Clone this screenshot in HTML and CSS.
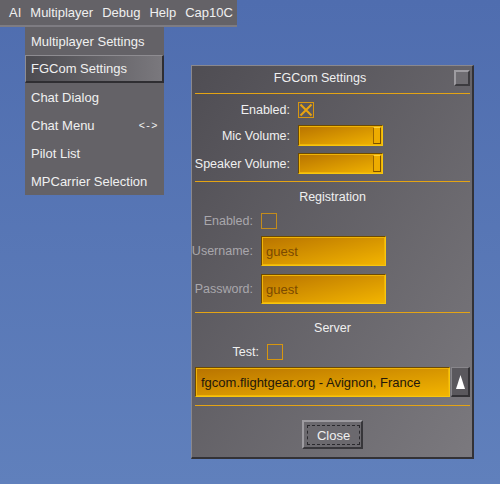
FILE: index.html
```html
<!DOCTYPE html>
<html lang="en">
  <head>
    <meta charset="UTF-8" />
    <title>FGCom Settings</title>
    <link rel="stylesheet" href="styles.css">
  </head>
  <body>
    <div class="menubar">
      <span class="menu-title">AI</span>
      <span class="menu-title">Multiplayer</span>
      <span class="menu-title">Debug</span>
      <span class="menu-title">Help</span>
      <span class="menu-title">Cap10C</span>
    </div>

    <div class="dropdown">
      <div class="menu-item">Multiplayer Settings</div>
      <div class="menu-item active">FGCom Settings</div>
      <div class="menu-item">Chat Dialog</div>
      <div class="menu-item">Chat Menu <span class="shortcut">&lt;-&gt;</span></div>
      <div class="menu-item">Pilot List</div>
      <div class="menu-item">MPCarrier Selection</div>
    </div>

    <div class="dialog">
      <div class="dialog-title">
        <span class="title-text">FGCom Settings</span>
        <span class="close-box"></span>
      </div>
      <div class="rule"></div>

      <div class="group group-audio">
        <div class="row row-check">
          <span class="label">Enabled:</span>
          <span class="check">
            <svg width="14" height="14" viewBox="0 0 14 14">
              <path d="M1.5 1.5 L12.5 12.5 M12.5 1.5 L1.5 12.5" stroke="#e9a40f" stroke-width="2" fill="none" />
            </svg>
          </span>
        </div>
        <div class="row row-slider">
          <span class="label">Mic Volume:</span>
          <div class="slider"><span class="knob"></span></div>
        </div>
        <div class="row row-slider">
          <span class="label">Speaker Volume:</span>
          <div class="slider"><span class="knob"></span></div>
        </div>
      </div>
      <div class="rule"></div>

      <div class="group group-reg">
        <div class="heading">Registration</div>
        <div class="row row-check disabled">
          <span class="label">Enabled:</span>
          <span class="check"></span>
        </div>
        <div class="row row-field disabled">
          <span class="label">Username:</span>
          <div class="field">guest</div>
        </div>
        <div class="row row-field disabled second">
          <span class="label">Password:</span>
          <div class="field">guest</div>
        </div>
      </div>
      <div class="rule"></div>

      <div class="group group-server">
        <div class="heading">Server</div>
        <div class="row row-check">
          <span class="label">Test:</span>
          <span class="check"></span>
        </div>
        <div class="combo">
          <div class="field combo-text">fgcom.flightgear.org - Avignon, France</div>
          <span class="arrow-btn">
            <svg width="9" height="14" viewBox="0 0 9 14">
              <polygon points="4.5,0 9,14 0,14" fill="#ffffff" />
            </svg>
          </span>
        </div>
      </div>
      <div class="rule"></div>

      <div class="buttons">
        <button class="btn"><span class="btn-focus">Close</span></button>
      </div>
    </div>
  </body>
</html>
```

FILE: styles.css
```css
* {
  margin: 0;
  padding: 0;
  box-sizing: border-box;
  font-family: "Liberation Sans", Arial, sans-serif;
}

body {
  width: 500px;
  height: 484px;
  overflow: hidden;
  position: relative;
  background: linear-gradient(to bottom, #4f6daf, #6080bc);
  font-size: 12.5px;
  color: #f0f0f0;
}

/* top menu bar */
.menubar {
  display: inline-flex;
  align-items: center;
  gap: 9px;
  height: 27px;
  padding: 0 4px 0 9px;
  background-color: #646267;
  border-bottom: 2px solid #7e7c82;
  font-size: 13px;
}

.dropdown {
  position: absolute;
  left: 25px;
  top: 27px;
  width: 139px;
  background-color: #646267;
  font-size: 13px;
}

.menu-item {
  display: flex;
  justify-content: space-between;
  align-items: center;
  height: 28px;
  padding: 0 5px 0 6px;
  white-space: nowrap;
}

.menu-item.active {
  background: linear-gradient(to right, #4c4b50, #7a787d);
  border-top: 1px solid #8e8c91;
  border-left: 1px solid #8e8c91;
  border-bottom: 2px solid #2f2e32;
  border-right: 2px solid #2f2e32;
  padding-left: 5px;
}

.shortcut {
  font-size: 10.5px;
  letter-spacing: 1.5px;
}

/* dialog window */
.dialog {
  position: absolute;
  left: 191px;
  top: 65px;
  width: 283px;
  height: 394px;
  display: flex;
  flex-direction: column;
  padding: 0 2px 0 3px;
  background: linear-gradient(to bottom right, #4f4d53, #7b797e);
  border-top: 1px solid #8a888d;
  border-left: 1px solid #8a888d;
  border-right: 2px solid #333236;
  border-bottom: 2px solid #333236;
}

.dialog-title {
  display: flex;
  align-items: center;
  height: 27px;
  padding-bottom: 4px;
}

.title-text {
  flex: 1;
  text-align: center;
}

.close-box {
  width: 16px;
  height: 16px;
  margin-left: 9px;
  background-color: #6f6d72;
  border-top: 2px solid #9e9ca1;
  border-left: 2px solid #9e9ca1;
  border-bottom: 2px solid #3c3b3f;
  border-right: 2px solid #3c3b3f;
}

.rule {
  height: 1px;
  background-color: #e4a414;
}

.group {
  display: flex;
  flex-direction: column;
  gap: 7px;
}

.group-audio {
  height: 87px;
  padding-top: 8px;
}

.group-reg {
  height: 130px;
}

.group-server {
  height: 92px;
}

.heading {
  height: 31px;
  line-height: 31px;
  text-align: center;
  margin-bottom: -7px;
}

.row {
  display: flex;
  align-items: center;
  gap: 8px;
}

.row-check {
  height: 16px;
}

.row-slider {
  height: 21px;
}

.row-field {
  height: 30px;
}

.row-field.second {
  margin-top: 1px;
}

/* labels hug the control; long ones spill to the left */
.label {
  display: flex;
  justify-content: flex-end;
  flex-shrink: 0;
  white-space: nowrap;
}

.group-audio .label {
  width: 95px;
}

.group-reg .label {
  width: 58px;
}

.group-server .label {
  width: 64px;
}

.disabled .label {
  color: #a9a7ac;
}

.check {
  display: flex;
  align-items: center;
  justify-content: center;
  width: 16px;
  height: 16px;
  border: 1px solid #d7960f;
}

.disabled .check {
  border-color: #c38c1c;
  background-color: rgba(90, 88, 94, 0.5);
}

/* orange entry boxes and sliders */
.slider,
.field {
  background: linear-gradient(to bottom right, #b87300, #f3b500);
  border-top: 1px solid #6e4a00;
  border-left: 1px solid #6e4a00;
  border-bottom: 1px solid #f7c60d;
  border-right: 1px solid #f7c60d;
  box-shadow: inset 0 0 0 1px #f0b406;
}

.slider {
  display: flex;
  justify-content: flex-end;
  width: 85px;
  height: 21px;
  padding: 1px;
}

.knob {
  width: 8px;
  height: 100%;
  background-color: #eeac00;
  border-left: 1px solid #9a6600;
  border-top: 1px solid #ffd23a;
  border-right: 1px solid #7a5000;
  border-bottom: 1px solid #7a5000;
}

.field {
  display: flex;
  align-items: center;
  width: 125px;
  height: 30px;
  padding-left: 4px;
  font-size: 13px;
  color: #7b4a00;
}

.combo {
  display: flex;
  gap: 1px;
  height: 30px;
}

.combo-text {
  width: 255px;
  padding-left: 5px;
  color: #24180a;
}

.arrow-btn {
  display: flex;
  align-items: center;
  justify-content: center;
  width: 19px;
  background-color: #5a585d;
  border-top: 1px solid #88868b;
  border-left: 1px solid #88868b;
  border-bottom: 2px solid #333236;
  border-right: 2px solid #333236;
}

.buttons {
  display: flex;
  justify-content: center;
  padding-top: 14px;
}

.btn {
  display: flex;
  width: 61px;
  height: 29px;
  padding: 3px 1px 2px 3px;
  background-color: #6b696e;
  border-top: 2px solid #9d9ba0;
  border-left: 2px solid #9d9ba0;
  border-bottom: 2px solid #37363a;
  border-right: 2px solid #37363a;
  color: #f0f0f0;
  font-size: 13px;
}

.btn-focus {
  flex: 1;
  display: flex;
  align-items: center;
  justify-content: center;
  border: 1px dashed #2a292d;
}
```
